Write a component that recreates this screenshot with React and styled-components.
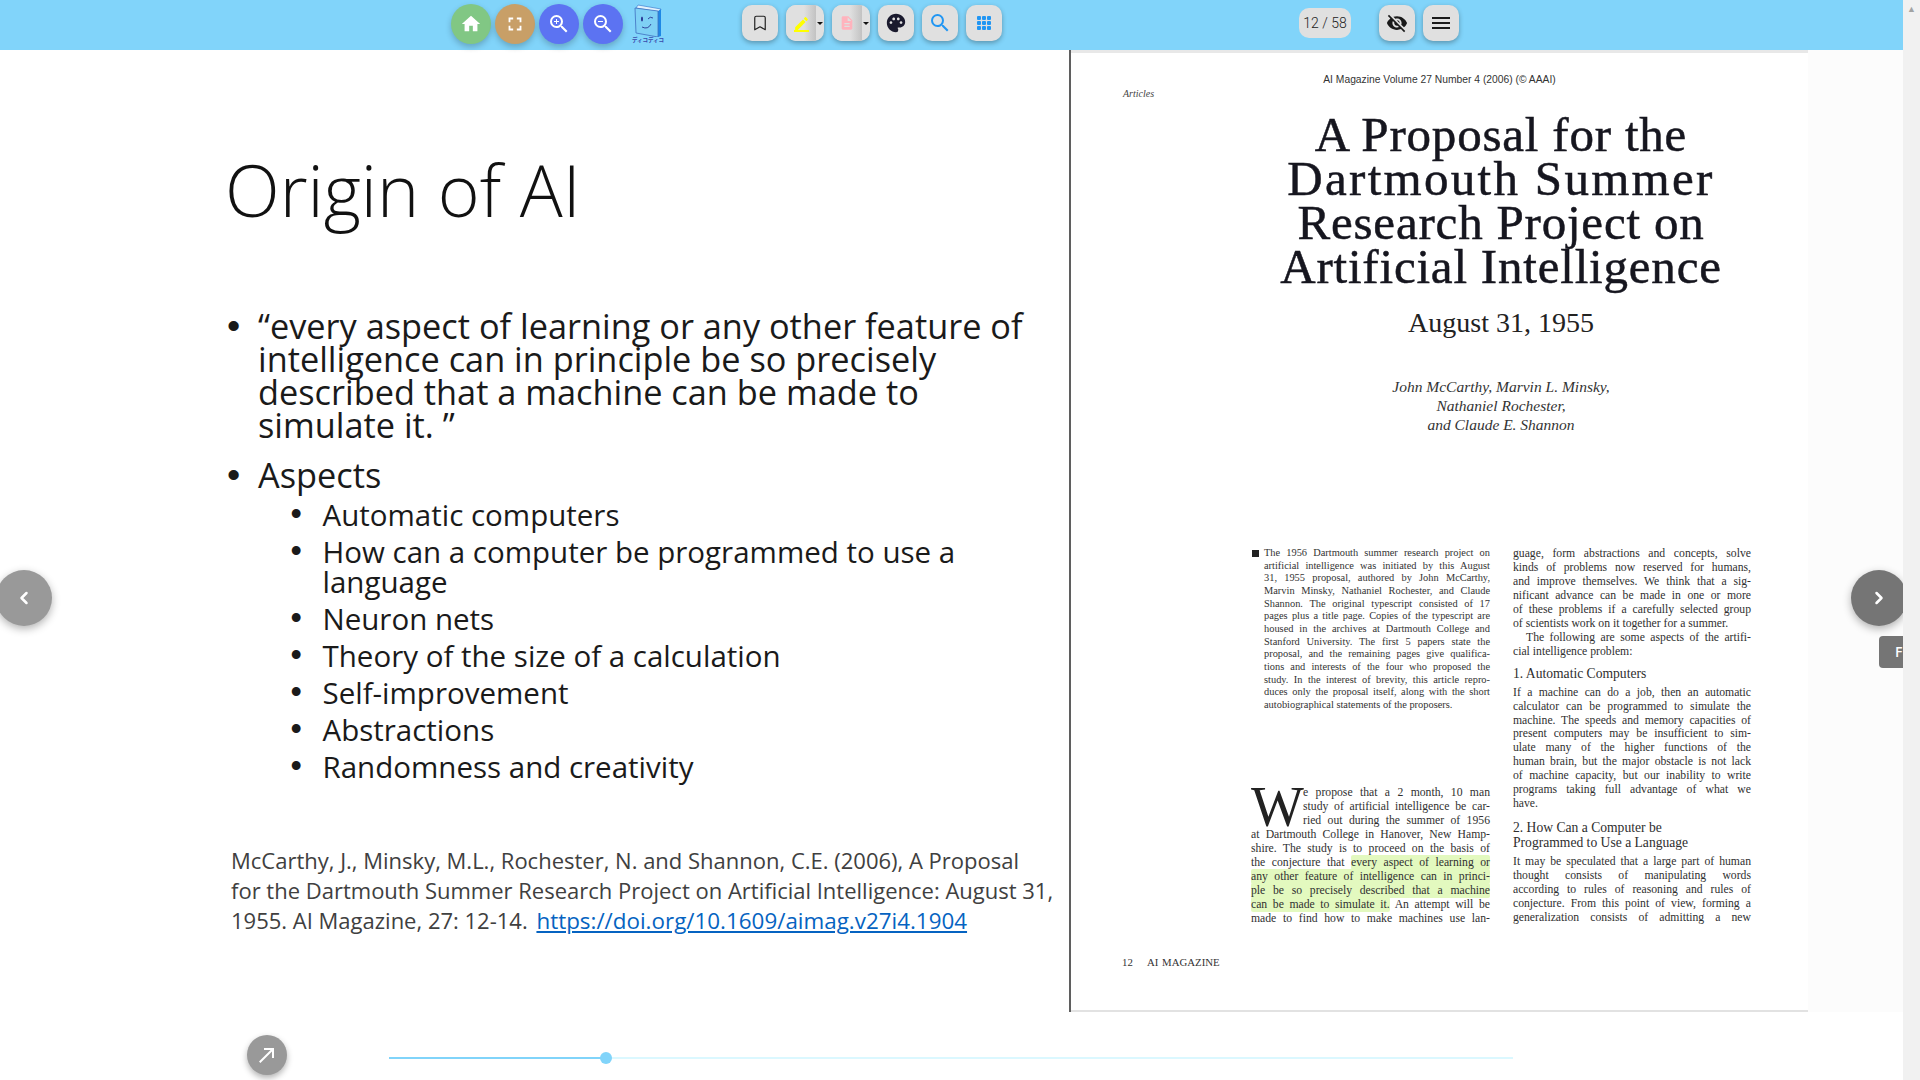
import React from "react";
import styled, { createGlobalStyle } from "styled-components";
import {
  MdHome,
  MdFullscreen,
  MdZoomIn,
  MdZoomOut,
  MdEdit,
  MdDescription,
  MdPalette,
  MdSearch,
  MdVisibilityOff,
  MdMenu,
  MdNorthEast,
} from "react-icons/md";
import { BsGrid3X3GapFill } from "react-icons/bs";
import { Bookmark, ChevronLeft, ChevronRight } from "lucide-react";

const GlobalStyle = createGlobalStyle`
  html, body {
    margin: 0;
    padding: 0;
    overflow: hidden;
    background: #fff;
  }
  * { box-sizing: border-box; }
`;

const Page = styled.div`
  position: relative;
  width: 1920px;
  height: 1080px;
  display: flex;
  overflow: hidden;
  font-family: "Open Sans", sans-serif;
`;

const Viewer = styled.div`
  position: relative;
  width: 1903px;
  height: 1080px;
  display: flex;
  flex-direction: column;
  overflow: hidden;
`;

const Scrollbar = styled.div`
  width: 17px;
  height: 1080px;
  background: #f1f1f1;
  color: #a3a3a3;
  font-size: 9px;
  line-height: 17px;
  text-align: center;
`;

const Toolbar = styled.header`
  position: relative;
  z-index: 2;
  height: 50px;
  flex: none;
  display: flex;
  align-items: flex-start;
  padding-left: 451px;
  background: #81d4fa;
`;

const Round = styled.button`
  width: 40px;
  height: 40px;
  margin: 4px 4px 0 0;
  padding: 0;
  display: flex;
  align-items: center;
  justify-content: center;
  border: 0;
  border-radius: 50%;
  color: #fff;
  background: ${(p) => p.$bg};
  box-shadow: 0 3px 6px rgba(0, 0, 0, 0.22);
`;

const BookLogo = styled.div`
  width: 30px;
  margin: 4px 0 0 6px;
  display: flex;
  flex-direction: column;
  align-items: center;
`;

const BookLabel = styled.span`
  margin-top: -1px;
  font-family: "Noto Sans CJK JP", sans-serif;
  font-size: 5.5px;
  font-weight: 700;
  line-height: 8px;
  color: #3949ab;
  white-space: nowrap;
`;

const Square = styled.button`
  width: 36px;
  height: 36px;
  margin: 5px 0 0 ${(p) => p.$gap || 8}px;
  padding: 0;
  display: flex;
  align-items: center;
  justify-content: center;
  border: 0;
  border-radius: 10px;
  background: #e0e0e0;
  color: ${(p) => p.$color || "#212121"};
  box-shadow: 0 2px 5px rgba(0, 0, 0, 0.3);
`;

const Split = styled.div`
  width: 38px;
  height: 36px;
  margin: 5px 0 0 8px;
  display: flex;
  border-radius: 10px;
  background: #e0e0e0;
  box-shadow: 0 2px 5px rgba(0, 0, 0, 0.3);
  overflow: hidden;
`;

const SplitMain = styled.div`
  width: 30px;
  display: flex;
  flex-direction: column;
  align-items: center;
  justify-content: center;
  background: linear-gradient(90deg, #e0e0e0 60%, #c2c2c2 100%);
  color: ${(p) => p.$color};
`;

const Underline = styled.span`
  width: 15px;
  height: 2px;
  margin-top: -2px;
  background: #ffff00;
`;

const Caret = styled.div`
  flex: 1;
  display: flex;
  align-items: center;
  justify-content: center;
  &::after {
    content: "";
    border-left: 3px solid transparent;
    border-right: 3px solid transparent;
    border-top: 3px solid #111;
  }
`;

const Counter = styled.div`
  width: 52px;
  height: 30px;
  margin: 8px 0 0 297px;
  border-radius: 10px;
  background: #e0e0e0;
  font-family: Roboto, sans-serif;
  font-size: 14px;
  font-weight: 300;
  line-height: 30px;
  text-align: center;
  color: #222;
`;

const Content = styled.main`
  height: 962px;
  flex: none;
  display: flex;
`;

const Slide = styled.section`
  width: 1069px;
  padding: 100px 30px 0 227px;
  color: #000;
`;

const SlideTitle = styled.h1`
  margin: 0 0 0 -2px;
  font-size: 71.5px;
  font-weight: 300;
  line-height: 80px;
  color: #111;
`;

const BulletList = styled.ul`
  margin: 79px 0 0 0;
  padding: 0;
  list-style: none;
`;

const Bullet = styled.li`
  display: grid;
  grid-template-columns: 31px 1fr;
  margin-bottom: 17px;
  font-size: 34.3px;
  line-height: 33px;
  color: #1a1a1a;
`;

const Dot = styled.span`
  font-family: "Liberation Sans", sans-serif;
  font-size: 1.1em;
`;

const SubList = styled.ul`
  margin: 9px 0 0 -31px;
  padding: 0 0 0 94.5px;
  list-style: none;
  grid-column: 1 / 3;
`;

const SubBullet = styled.li`
  display: grid;
  grid-template-columns: 32px 1fr;
  margin-bottom: 7.5px;
  font-size: 29.5px;
  line-height: 29.5px;
  color: #1a1a1a;
`;

const Reference = styled.p`
  width: 830px;
  margin: 56px 0 0 4px;
  font-size: 22px;
  line-height: 30px;
  white-space: nowrap;
  color: #404040;
`;

const RefLink = styled.a`
  margin-left: 3px;
  font-size: 22.4px;
  color: #0563c1;
  text-decoration: underline;
`;

const Divider = styled.div`
  width: 2px;
  background: #5f5f5f;
`;

const PdfPage = styled.article`
  width: 737px;
  height: 962px;
  border-top: 3px solid #e8e8e8;
  border-bottom: 2px solid #e2e2e2;
  font-family: "Liberation Serif", serif;
  color: #222;
`;

const PdfHeader = styled.div`
  margin-top: 21px;
  font-family: "Liberation Sans", sans-serif;
  font-size: 10.3px;
  line-height: 12px;
  text-align: center;
  color: #333;
`;

const PdfSection = styled.div`
  font-size: 10px;
  font-style: italic;
  line-height: 12px;
  margin: 2px 0 0 52px;
  color: #444;
`;

const PdfBody = styled.div`
  width: 500px;
  margin-left: 180px;
`;

const PdfTitle = styled.h2`
  margin: 13px 0 0;
  font-size: 49px;
  font-weight: 400;
  line-height: 44px;
  letter-spacing: 0.8px;
  white-space: nowrap;
  text-align: center;
  color: #16161f;
  -webkit-text-stroke: 0.5px #16161f;
`;

const WideTitleLine = styled.span`
  letter-spacing: 2.3px;
`;

const PdfDate = styled.div`
  margin-top: 18px;
  font-size: 28px;
  line-height: 32px;
  text-align: center;
`;

const PdfAuthors = styled.div`
  margin-top: 38px;
  font-size: 15.5px;
  font-style: italic;
  line-height: 19px;
  text-align: center;
  color: #333;
`;

const PdfColumns = styled.div`
  display: grid;
  grid-template-columns: 239px 238px;
  column-gap: 23px;
  margin-top: 113px;
`;

const Abstract = styled.div`
  display: flex;
  margin: 0 0 0 1px;
  height: 239px;
`;

const AbstractMark = styled.span`
  width: 7px;
  height: 7px;
  margin: 3px 5px 0 0;
  flex: none;
  background: #222;
`;

const AbstractText = styled.div`
  width: 226px;
  font-size: 10.4px;
  line-height: 12.65px;
  color: #333;
`;

const Line = styled.div`
  white-space: nowrap;
  text-align: ${(p) => (p.$last ? "left" : "justify")};
  text-align-last: ${(p) => (p.$last ? "left" : "justify")};
  text-indent: ${(p) => p.$indent || 0}px;
`;

const Prose = styled.div`
  font-size: 11.7px;
  line-height: 13.95px;
  color: #303030;
`;

const DropRow = styled.div`
  display: flex;
`;

const DropCap = styled.span`
  width: 52px;
  flex: none;
  font-size: 56px;
  line-height: 42px;
  color: #222;
`;

const DropLines = styled.div`
  flex: 1;
`;

const Mark = styled.span`
  padding: 1px 0;
  background: #e3f9bf;
  border-radius: 2px;
`;

const ProseHeading = styled.h3`
  margin: ${(p) => p.$top}px 0 ${(p) => p.$bottom}px;
  font-size: 13.6px;
  font-weight: 400;
  line-height: 15px;
  color: #2e2e2e;
`;

const PdfFooter = styled.div`
  margin: 30px 0 0 51px;
  font-size: 10.8px;
  line-height: 12px;
  word-spacing: 1px;
  color: #333;
`;

const PageSide = styled.div`
  flex: 1;
  background: #fcfcfc;
`;

const BottomBar = styled.footer`
  flex: 1;
  display: flex;
  padding: 23px 0 0 247px;
`;

const ExitButton = styled.button`
  width: 40px;
  height: 40px;
  padding: 0;
  display: flex;
  align-items: center;
  justify-content: center;
  border: 0;
  border-radius: 50%;
  background: #999;
  color: #fff;
  box-shadow: 0 3px 6px rgba(0, 0, 0, 0.3);
`;

const Slider = styled.div`
  position: relative;
  width: 1124px;
  height: 2px;
  margin: 22px 0 0 102px;
  background: #dbf8ff;
`;

const SliderFill = styled.div`
  height: 2px;
  background: #81d4fa;
`;

const SliderThumb = styled.span`
  position: absolute;
  top: -5px;
  width: 12px;
  height: 12px;
  margin-left: -6px;
  border-radius: 50%;
  background: #81d4fa;
`;

const SideNav = styled.button`
  position: absolute;
  top: 570px;
  ${(p) => (p.$side === "left" ? "left: -4px;" : "right: -4px;")}
  width: 56px;
  height: 56px;
  padding: 0;
  display: flex;
  align-items: center;
  justify-content: center;
  border: 0;
  border-radius: 50%;
  background: ${(p) => (p.$side === "left" ? "#999" : "#757575")};
  color: #fff;
  box-shadow: 0 3px 8px rgba(0, 0, 0, 0.3);
`;

const SideTab = styled.div`
  position: absolute;
  top: 636px;
  right: -20px;
  width: 44px;
  height: 32px;
  padding-left: 16px;
  border-radius: 4px;
  background: #757575;
  color: #fff;
  font-size: 14px;
  font-weight: 600;
  line-height: 32px;
`;

const aspects = [
  "Automatic computers",
  "How can a computer be programmed to use a language",
  "Neuron nets",
  "Theory of the size of a calculation",
  "Self-improvement",
  "Abstractions",
  "Randomness and creativity",
];

const abstractLines = [
  "The 1956 Dartmouth summer research project on",
  "artificial intelligence was initiated by this August",
  "31, 1955 proposal, authored by John McCarthy,",
  "Marvin Minsky, Nathaniel Rochester, and Claude",
  "Shannon. The original typescript consisted of 17",
  "pages plus a title page. Copies of the typescript are",
  "housed in the archives at Dartmouth College and",
  "Stanford University. The first 5 papers state the",
  "proposal, and the remaining pages give qualifica-",
  "tions and interests of the four who proposed the",
  "study. In the interest of brevity, this article repro-",
  "duces only the proposal itself, along with the short",
];

const introLines = [
  "guage, form abstractions and concepts, solve",
  "kinds of problems now reserved for humans,",
  "and improve themselves. We think that a sig-",
  "nificant advance can be made in one or more",
  "of these problems if a carefully selected group",
];

const computerLines = [
  "If a machine can do a job, then an automatic",
  "calculator can be programmed to simulate the",
  "machine. The speeds and memory capacities of",
  "present computers may be insufficient to sim-",
  "ulate many of the higher functions of the",
  "human brain, but the major obstacle is not lack",
  "of machine capacity, but our inability to write",
  "programs taking full advantage of what we",
];

const languageLines = [
  "It may be speculated that a large part of human",
  "thought consists of manipulating words",
  "according to rules of reasoning and rules of",
  "conjecture. From this point of view, forming a",
  "generalization consists of admitting a new",
];

const Book = () => (
  <svg width="30" height="33" viewBox="0 0 30 33">
    <path d="M5 1 L28 5 L27 8 L3 4 Z" fill="#e3f2fd" stroke="#3f7fd0" strokeWidth="0.7" />
    <path d="M25 7 L28 5 L28 32 L25 33 Z" fill="#1e88e5" />
    <path d="M2 4 L25 7 L25 33 L3 29 Z" fill="#7fd0f5" stroke="#3f6fc0" strokeWidth="0.8" />
    <ellipse cx="9" cy="15" rx="1" ry="2.6" fill="#283593" />
    <path d="M15 15 Q17 12 20 14" fill="none" stroke="#283593" strokeWidth="0.9" />
    <path d="M9 23 Q15 26 18 20" fill="none" stroke="#283593" strokeWidth="0.9" />
  </svg>
);

const App = () => {
  return (
    <>
      <GlobalStyle />
      <Page>
        <Viewer>
          <Toolbar>
            <Round $bg="#81c784"><MdHome size={22} /></Round>
            <Round $bg="#c89f67"><MdFullscreen size={22} /></Round>
            <Round $bg="#5c73f2"><MdZoomIn size={24} /></Round>
            <Round $bg="#5c73f2"><MdZoomOut size={24} /></Round>
            <BookLogo>
              <Book />
              <BookLabel>ディコディコ</BookLabel>
            </BookLogo>
            <Square $gap={79} $color="#222"><Bookmark size={18} strokeWidth={1.6} /></Square>
            <Split>
              <SplitMain $color="#ffff00">
                <MdEdit size={17} />
                <Underline />
              </SplitMain>
              <Caret />
            </Split>
            <Split>
              <SplitMain $color="#ffb3bd">
                <MdDescription size={16} />
              </SplitMain>
              <Caret />
            </Split>
            <Square $color="#1a1a2e"><MdPalette size={22} /></Square>
            <Square $color="#2196f3"><MdSearch size={24} /></Square>
            <Square $color="#2196f3"><BsGrid3X3GapFill size={16} /></Square>
            <Counter>12 / 58</Counter>
            <Square $gap={28} $color="#1a1a1a"><MdVisibilityOff size={22} /></Square>
            <Square $color="#1a1a1a"><MdMenu size={24} /></Square>
          </Toolbar>

          <Content>
            <Slide>
              <SlideTitle>Origin of AI</SlideTitle>
              <BulletList>
                <Bullet>
                  <Dot>•</Dot>
                  <span>
                    “every aspect of learning or any other feature of
                    intelligence can in principle be so precisely described
                    that a machine can be made to simulate it. ”
                  </span>
                </Bullet>
                <Bullet>
                  <Dot>•</Dot>
                  <span>Aspects</span>
                  <SubList>
                    {aspects.map((item) => (
                      <SubBullet key={item}>
                        <Dot>•</Dot>
                        <span>{item}</span>
                      </SubBullet>
                    ))}
                  </SubList>
                </Bullet>
              </BulletList>
              <Reference>
                McCarthy, J., Minsky, M.L., Rochester, N. and Shannon, C.E.
                (2006), A Proposal
                <br />
                for the Dartmouth Summer Research Project on Artificial
                Intelligence: August 31,
                <br />
                1955. AI Magazine, 27: 12-14.{" "}
                <RefLink href="#">https://doi.org/10.1609/aimag.v27i4.1904</RefLink>
              </Reference>
            </Slide>

            <Divider />

            <PdfPage>
              <PdfHeader>AI Magazine Volume 27 Number 4 (2006) (© AAAI)</PdfHeader>
              <PdfSection>Articles</PdfSection>
              <PdfBody>
                <PdfTitle>
                  A Proposal for the
                  <br />
                  <WideTitleLine>Dartmouth Summer</WideTitleLine>
                  <br />
                  Research Project on
                  <br />
                  Artificial Intelligence
                </PdfTitle>
                <PdfDate>August 31, 1955</PdfDate>
                <PdfAuthors>
                  John McCarthy, Marvin L. Minsky,
                  <br />
                  Nathaniel Rochester,
                  <br />
                  and Claude E. Shannon
                </PdfAuthors>
                <PdfColumns>
                  <div>
                    <Abstract>
                      <AbstractMark />
                      <AbstractText>
                        {abstractLines.map((line) => (
                          <Line key={line}>{line}</Line>
                        ))}
                        <Line $last>autobiographical statements of the proposers.</Line>
                      </AbstractText>
                    </Abstract>
                    <Prose>
                      <DropRow>
                        <DropCap>W</DropCap>
                        <DropLines>
                          <Line>e propose that a 2 month, 10 man</Line>
                          <Line>study of artificial intelligence be car-</Line>
                          <Line>ried out during the summer of 1956</Line>
                        </DropLines>
                      </DropRow>
                      <Line>at Dartmouth College in Hanover, New Hamp-</Line>
                      <Line>shire. The study is to proceed on the basis of</Line>
                      <Line>the conjecture that <Mark>every aspect of learning or</Mark></Line>
                      <Line><Mark>any other feature of intelligence can in princi-</Mark></Line>
                      <Line><Mark>ple be so precisely described that a machine</Mark></Line>
                      <Line><Mark>can be made to simulate it.</Mark> An attempt will be</Line>
                      <Line>made to find how to make machines use lan-</Line>
                    </Prose>
                  </div>
                  <Prose>
                    {introLines.map((line) => (
                      <Line key={line}>{line}</Line>
                    ))}
                    <Line $last>of scientists work on it together for a summer.</Line>
                    <Line $indent={13}>The following are some aspects of the artifi-</Line>
                    <Line $last>cial intelligence problem:</Line>
                    <ProseHeading $top={7} $bottom={5}>1. Automatic Computers</ProseHeading>
                    {computerLines.map((line) => (
                      <Line key={line}>{line}</Line>
                    ))}
                    <Line $last>have.</Line>
                    <ProseHeading $top={9} $bottom={5}>
                      2. How Can a Computer be
                      <br />
                      Programmed to Use a Language
                    </ProseHeading>
                    {languageLines.map((line) => (
                      <Line key={line}>{line}</Line>
                    ))}
                  </Prose>
                </PdfColumns>
              </PdfBody>
              <PdfFooter>12 &nbsp;&nbsp; AI MAGAZINE</PdfFooter>
            </PdfPage>

            <PageSide />
          </Content>

          <BottomBar>
            <ExitButton><MdNorthEast size={24} /></ExitButton>
            <Slider>
              <SliderFill style={{ width: `${(217 / 1124) * 100}%` }} />
              <SliderThumb style={{ left: `${(217 / 1124) * 100}%` }} />
            </Slider>
          </BottomBar>

          <SideNav $side="left"><ChevronLeft size={20} strokeWidth={3} /></SideNav>
          <SideTab>F</SideTab>
          <SideNav $side="right"><ChevronRight size={20} strokeWidth={3} /></SideNav>
        </Viewer>
        <Scrollbar>▲</Scrollbar>
      </Page>
    </>
  );
};

export default App;
